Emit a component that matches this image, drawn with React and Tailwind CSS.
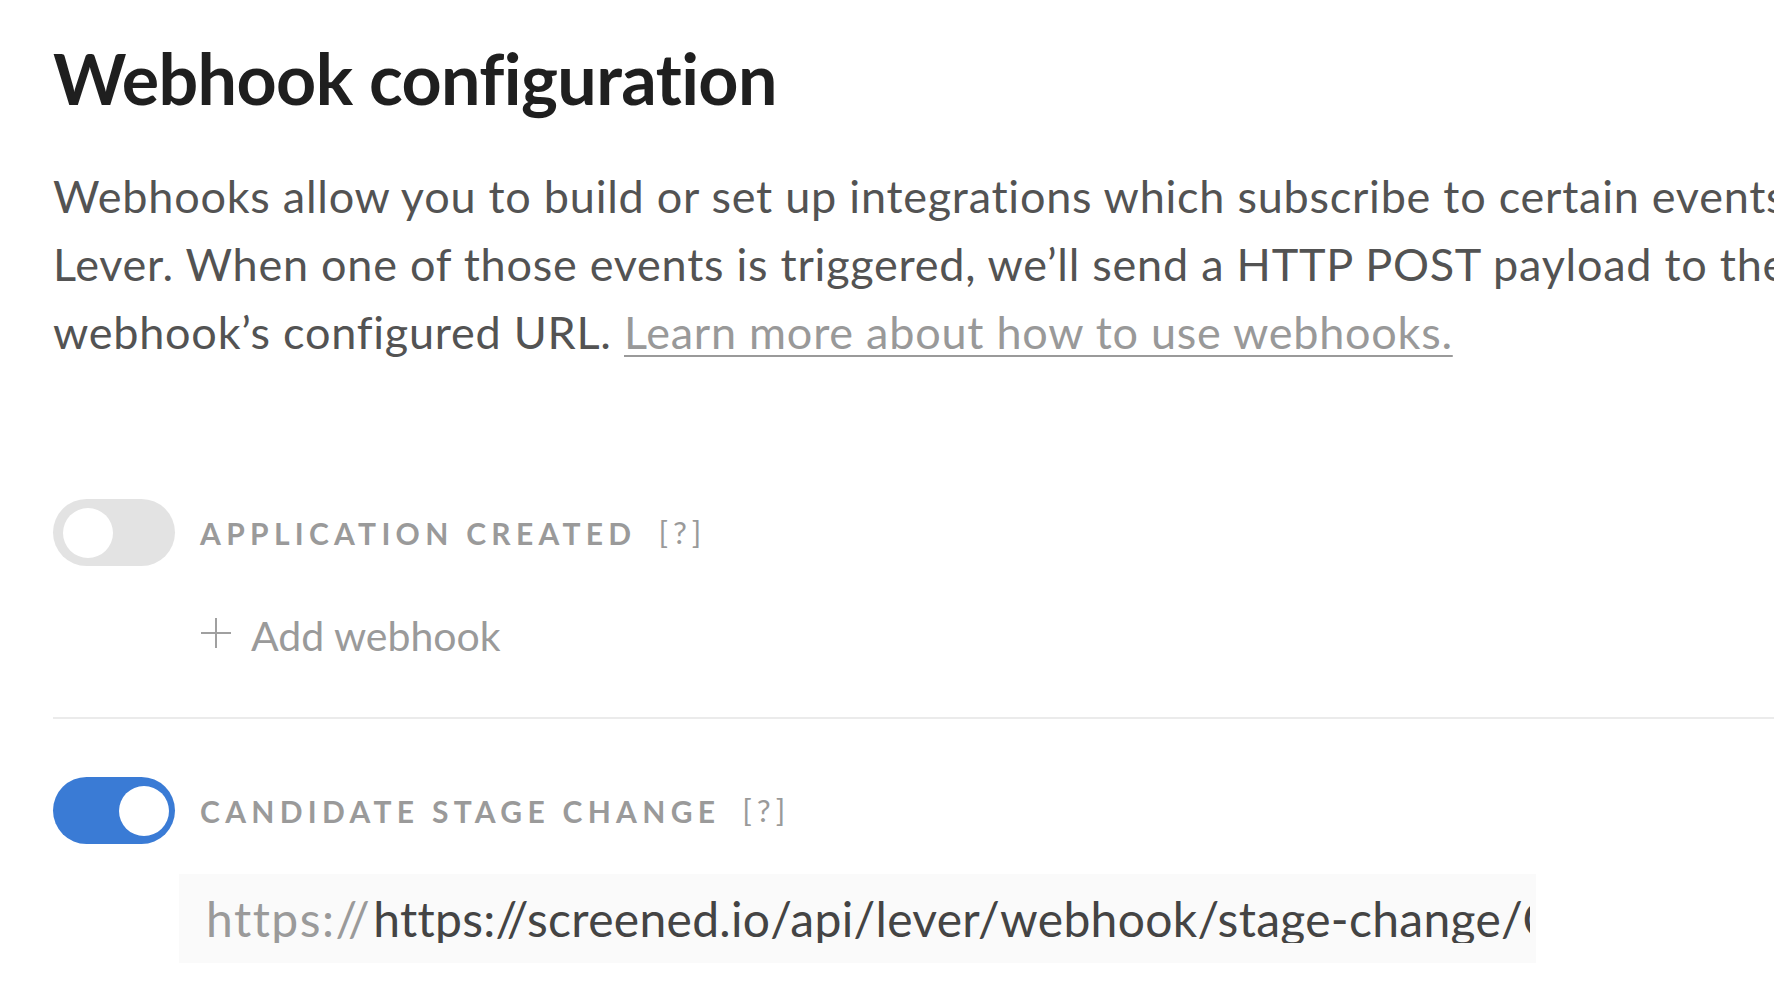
import React from 'react';

const Toggle = ({ on }) => (
  <div
    className={`w-[122px] h-[67px] shrink-0 rounded-full flex items-center ${
      on ? 'bg-[#3a7bd5] justify-end pr-[6px]' : 'bg-[#e3e3e3] justify-start pl-[10px]'
    }`}
  >
    <div className="w-[50px] h-[50px] rounded-full bg-white" />
  </div>
);

const EventRow = ({ on, label }) => (
  <div className="flex items-center">
    <Toggle on={on} />
    <span className="ml-[25px] text-[30px] leading-none font-bold tracking-[5.3px] text-[#9a9a9a] whitespace-nowrap">
      {label}
    </span>
    <span className="ml-[22px] text-[31px] leading-none tracking-[5px] text-[#9a9a9a]">[?]</span>
  </div>
);

const App = () => {
  return (
    <div className="w-[1774px] h-[984px] overflow-hidden bg-white font-['Lato',sans-serif]">
      <div className="pl-[53px] pt-[43px] w-[2200px]">
        <h1 className="text-[70px] leading-[70px] font-bold tracking-[-0.6px] text-[#1f1f1f] whitespace-nowrap">
          Webhook configuration
        </h1>

        <p className="mt-[49px] text-[45px] leading-[68px] tracking-[0.75px] text-[#535353] whitespace-nowrap">
          Webhooks allow you to build or set up integrations which subscribe to certain events in
          <br />
          Lever. When one of those events is triggered, we’ll send a HTTP POST payload to the
          <br />
          webhook’s configured URL.{' '}
          <a className="text-[#999] underline decoration-2 underline-offset-[6px] decoration-[#9a9a9a]">
            Learn more about how to use webhooks.
          </a>
        </p>

        <div className="mt-[133px]">
          <EventRow label="APPLICATION CREATED" />
        </div>

        <div className="mt-[48px] ml-[147px] h-[44px] flex items-start text-[#9a9a9a]">
          <svg width="32" height="32" viewBox="0 0 32 32" className="mt-[3px]" fill="none" stroke="#a0a0a0" strokeWidth="2">
            <line x1="16" y1="1" x2="16" y2="31" />
            <line x1="1" y1="16" x2="31" y2="16" />
          </svg>
          <span className="ml-[19px] text-[41px] leading-[44px]">Add webhook</span>
        </div>

        <div className="mt-[59px] h-[2px] bg-[#ebebeb]" />

        <div className="mt-[58px]">
          <EventRow on label="CANDIDATE STAGE CHANGE" />
        </div>

        <div className="mt-[30px] ml-[126px] w-[1357px] h-[89px] bg-[#fafafa] flex items-center pl-[27px] pr-[6px]">
          <div className="flex items-center overflow-hidden whitespace-nowrap text-[48px] leading-none tracking-[0.3px]">
            <span className="text-[#9a9a9a] tracking-[1.5px]">https://</span>
            <span className="ml-[2px] text-[#444]">https://screened.io/api/lever/webhook/stage-change/C8fa21c0</span>
          </div>
        </div>
      </div>
    </div>
  );
};

export default App;
